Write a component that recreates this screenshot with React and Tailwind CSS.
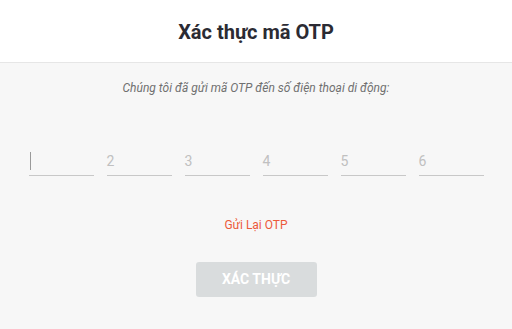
import React from 'react';

const slots = ['', '2', '3', '4', '5', '6'];

const App = () => {
  return (
    <div className="w-[512px] h-[329px] flex flex-col bg-[#f7f7f7] font-['Roboto',sans-serif]">
      {/* Header */}
      <div className="h-[63px] shrink-0 bg-white border-b border-[#e6e6e6] flex items-center justify-center">
        <h1 className="mt-[2px] text-[20px] font-bold text-[#2b2b33] leading-none">Xác thực mã OTP</h1>
      </div>

      {/* Body */}
      <div className="flex flex-col items-center">
        <p className="mt-[18px] text-[12px] italic text-[#707070] leading-[14px]">
          Chúng tôi đã gửi mã OTP đến số điện thoại di động:
        </p>

        <div className="mt-[56px] flex gap-[13px]">
          {slots.map((s, i) => (
            <div key={i} className="w-[65px] h-[25px] border-b border-[#c8c8c8] flex items-start">
              {i === 0 ? (
                <span className="ml-[1px] mt-[1px] w-[1.5px] h-[18px] bg-[#9a9a9a]" />
              ) : (
                <span className="text-[14px] text-[#c0c0c0] leading-[20px]">{s}</span>
              )}
            </div>
          ))}
        </div>

        <button className="mt-[42px] text-[12px] text-[#ec5a3a] leading-[14px]">Gửi Lại OTP</button>

        <button className="mt-[30px] w-[121px] h-[35px] rounded-[3px] bg-[#d9dcdd] text-white text-[14px] font-bold">
          XÁC THỰC
        </button>
      </div>
    </div>
  );
};

export default App;
